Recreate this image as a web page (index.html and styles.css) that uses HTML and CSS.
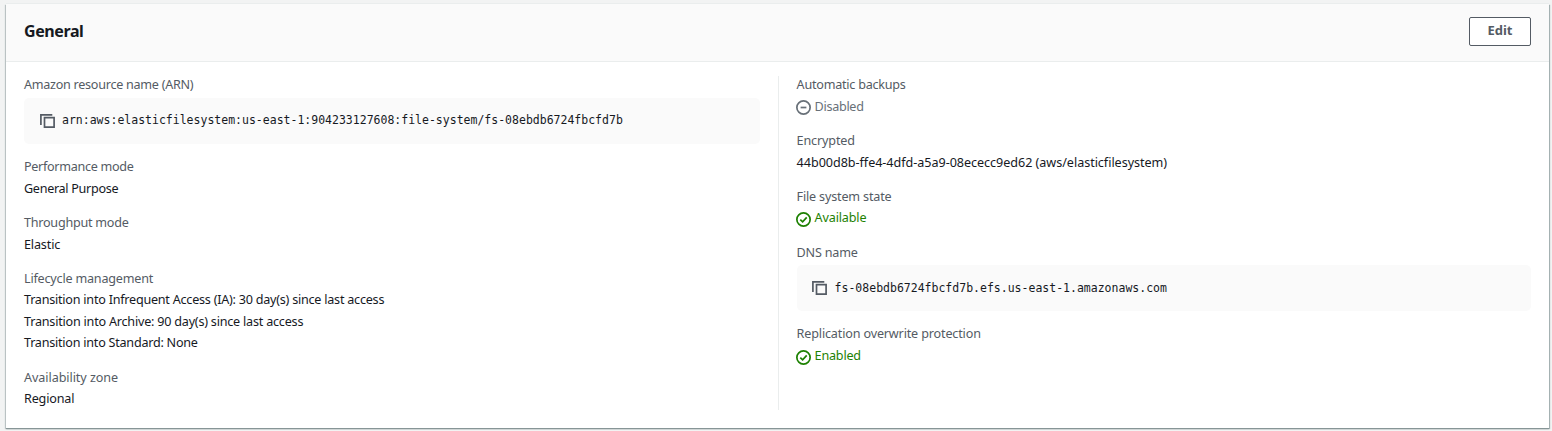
FILE: index.html
```html
<!DOCTYPE html>
<html lang="en">
<head>
<meta charset="utf-8">
<title>General</title>
<link rel="stylesheet" href="styles.css">
</head>
<body>
<section class="panel">
  <header class="panel-header">
    <h2 class="title">General</h2>
    <button class="edit" type="button">Edit</button>
  </header>
  <div class="columns">
    <div class="column">
      <div class="item">
        <div class="label"><span class="t-arn">Amazon resource name (ARN)</span></div>
        <div class="code">
          <svg class="copy" viewBox="0 0 15 14"><path d="M.9 11V.9h11.400M4.500 3.600h9.600v9.500H4.500z"/></svg>
          <code>arn:aws:elasticfilesystem:us-east-1:904233127608:file-system/fs-08ebdb6724fbcfd7b</code>
        </div>
      </div>
      <div class="item">
        <div class="label"><span class="t-perf">Performance mode</span></div>
        <div class="value"><span class="t-gp">General Purpose</span></div>
      </div>
      <div class="item">
        <div class="label"><span class="t-thr">Throughput mode</span></div>
        <div class="value"><span class="t-el">Elastic</span></div>
      </div>
      <div class="item">
        <div class="label"><span class="t-life">Lifecycle management</span></div>
        <div class="value"><span class="t-ia">Transition into Infrequent Access (IA): 30 day(s) since last access</span></div>
        <div class="value"><span class="t-arc">Transition into Archive: 90 day(s) since last access</span></div>
        <div class="value"><span class="t-std">Transition into Standard: None</span></div>
      </div>
      <div class="item">
        <div class="label"><span class="t-az">Availability zone</span></div>
        <div class="value"><span class="t-reg">Regional</span></div>
      </div>
    </div>
    <div class="column column-right">
      <div class="item">
        <div class="label"><span class="t-auto">Automatic backups</span></div>
        <div class="value status disabled"><svg class="icon" viewBox="0 0 14 14"><circle cx="7" cy="7" r="6.200"/><path d="M4.300 7h5.400"/></svg><span class="t-dis">Disabled</span></div>
      </div>
      <div class="item">
        <div class="label"><span class="t-enc">Encrypted</span></div>
        <div class="value key"><span class="t-key">44b00d8b-ffe4-4dfd-a5a9-08ececc9ed62 (aws/elasticfilesystem)</span></div>
      </div>
      <div class="item">
        <div class="label"><span class="t-fs">File system state</span></div>
        <div class="value status success"><svg class="icon icon-low" viewBox="0 0 14 14"><circle cx="7" cy="7" r="6.200"/><path d="M4 7.100l2.200 2.100 3.800-4.200"/></svg><span class="t-ava">Available</span></div>
      </div>
      <div class="item dns-item">
        <div class="label"><span class="t-dns">DNS name</span></div>
        <div class="code">
          <svg class="copy" viewBox="0 0 15 14"><path d="M.9 11V.9h11.400M4.500 3.600h9.600v9.500H4.500z"/></svg>
          <code class="dns">fs-08ebdb6724fbcfd7b.efs.us-east-1.amazonaws.com</code>
        </div>
      </div>
      <div class="item rep-item">
        <div class="label"><span class="t-rep">Replication overwrite protection</span></div>
        <div class="value status success"><svg class="icon icon-low" viewBox="0 0 14 14"><circle cx="7" cy="7" r="6.200"/><path d="M4 7.100l2.200 2.100 3.800-4.200"/></svg><span class="t-ena">Enabled</span></div>
      </div>
    </div>
  </div>
</section>
</body>
</html>
```
FILE: styles.css
```css
* { box-sizing: border-box; }
body {
  margin: 0;
  height: 431px;
  padding: 4px 3px 3px 6px;
  overflow: hidden;
  background: #f2f3f3;
  color: #16191f;
  font: 12.6px/21.5px "Noto Sans", "Open Sans", sans-serif;
}
.panel {
  height: 424px;
  background: #fff;
  box-shadow: 0 1px 1px #879596, 1px 1px 1px #aab7b8, -1px 1px 1px #c5cccd, 0 -1px 0 #eaeded;
}
.panel-header {
  display: flex;
  align-items: center;
  justify-content: space-between;
  height: 58px;
  padding: 0 18px 3px;
  background: #fafafa;
  border-bottom: 1px solid #eaeded;
}
.title { margin: 2px 0 0; font-size: 16px; font-weight: 700; letter-spacing: -.4px; }
.edit {
  width: 62px;
  height: 29px;
  padding: 0 0 2px;
  background: #fff;
  border: 1px solid #545b64;
  border-radius: 2px;
  color: #545b64;
  font: 700 13px "Noto Sans", sans-serif;
}
.columns {
  display: grid;
  grid-template-columns: 755px 1fr;
  gap: 17.600px;
  height: 348px;
  margin-top: 14px;
  padding: 0 18px 0 18px;
}
.column { display: flex; flex-direction: column; gap: 12.750px; padding-right: 19px; margin-top: -2px; }
.column-right { padding: 0; }
.column:first-child {
  background: linear-gradient(#eaeded, #eaeded) right 2px / 1px 334px no-repeat;
}
.label { color: #545b64; white-space: nowrap; }
.value { white-space: nowrap; }
.key { padding-top: .5px; margin-bottom: -.5px; }
.code {
  display: flex;
  align-items: center;
  gap: 7px;
  height: 46px;
  margin-top: 2px;
  padding: 0 16px 2px;
  background: #fafafa;
  border-radius: 5px;
}
code { font: 11.500px/18px "DejaVu Sans Mono", monospace; white-space: nowrap; }
.dns { margin-top: 2px; }
.dns-item { padding-top: .5px; }
.dns-item .code { margin-top: 1.500px; }
.rep-item { margin-top: -.500px; }
.rep-item .status { padding-top: .4px; }
.copy { width: 15px; height: 14px; margin-top: 2px; margin-right: .4px; margin-left: -.4px; fill: none; stroke: #545b64; stroke-width: 1.700; }
.status { display: flex; align-items: center; gap: 3px; }
.icon { width: 15px; height: 15px; margin: 2px .4px 0 -.4px; fill: none; stroke: currentColor; stroke-width: 1.600; }
.icon-low { margin-top: 3px; }
.disabled { color: #687078; }
.success { color: #1d8102; }

.t-arn { letter-spacing: -.270px; }
.t-perf, .t-gp { letter-spacing: -.300px; }
.t-thr { letter-spacing: -.250px; }
.t-el, .t-enc { letter-spacing: -.150px; }
.t-life, .t-dns { letter-spacing: -.200px; }
.t-ia { letter-spacing: -.235px; }
.t-arc { letter-spacing: -.215px; }
.t-std { letter-spacing: -.240px; }
.t-az { letter-spacing: -.070px; }
.t-reg { letter-spacing: -.180px; }
.t-auto { letter-spacing: -.240px; }
.t-dis { letter-spacing: -.300px; }
.t-key { letter-spacing: -.040px; }
.t-fs { letter-spacing: -.180px; }
.t-ava { letter-spacing: -.150px; }
.t-rep { letter-spacing: -.160px; }
.t-ena { letter-spacing: -.200px; }
```
